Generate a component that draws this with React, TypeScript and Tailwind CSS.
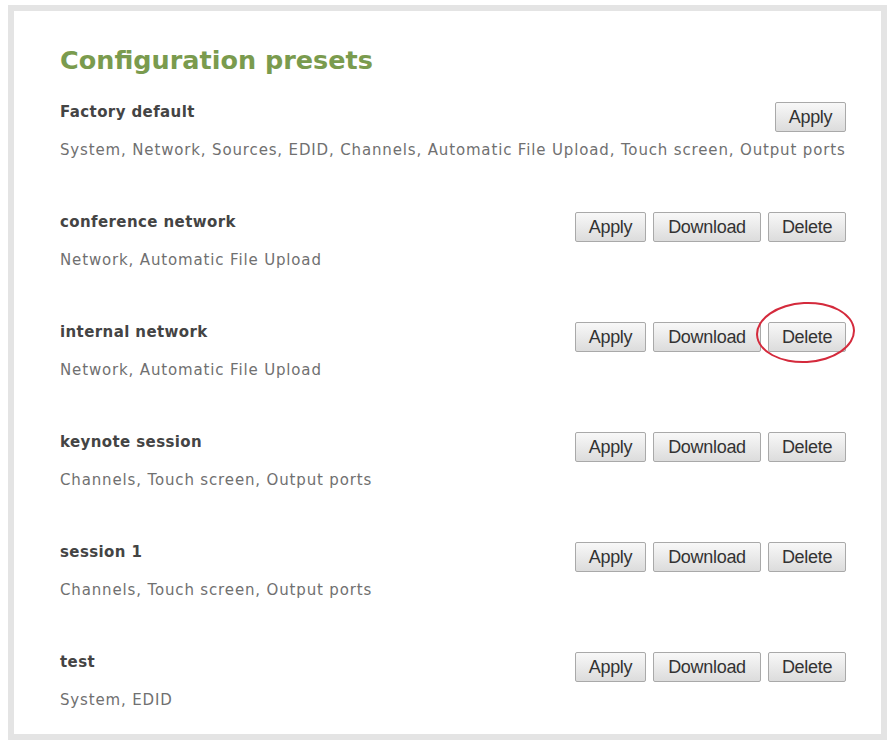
import React from "react";

type Preset = { name: string; desc: string; factory?: boolean; circled?: boolean };

const presets: Preset[] = [
  { name: "Factory default", desc: "System, Network, Sources, EDID, Channels, Automatic File Upload, Touch screen, Output ports", factory: true },
  { name: "conference network", desc: "Network, Automatic File Upload" },
  { name: "internal network", desc: "Network, Automatic File Upload", circled: true },
  { name: "keynote session", desc: "Channels, Touch screen, Output ports" },
  { name: "session 1", desc: "Channels, Touch screen, Output ports" },
  { name: "test", desc: "System, EDID" },
];

function Btn({ label, w }: { label: string; w: string }) {
  return (
    <button
      className={`h-[30px] ${w} border border-[#a9a9a9] rounded-[2px] bg-gradient-to-b from-[#f8f8f8] to-[#dcdcdc] text-[#333] text-[18px] leading-none tracking-[-0.3px] font-['Liberation_Sans',Arial,sans-serif] flex items-center justify-center`}
    >
      {label}
    </button>
  );
}

export default function App() {
  return (
    <div className="w-[890px] h-[740px] bg-white overflow-hidden">
      <div className="ml-[8px] mt-[5px] w-[879px] h-[735px] border-[6px] border-[#e4e4e4] bg-white">
        <div className="pl-[46px] pr-[35px] font-['DejaVu_Sans',Verdana,sans-serif]">
          <h1 className="mt-[34px] h-[30px] leading-[30px] text-[25.5px] font-bold text-[#7a9b4e]">
            Configuration presets
          </h1>
          <div className="mt-[27px]">
            {presets.map((p) => (
              <div key={p.name} className="h-[110px]">
                <div className="flex justify-between items-start">
                  <div className="mt-[1px] text-[15px] leading-[18px] tracking-[0.4px] font-bold text-[#444]">{p.name}</div>
                  <div className="flex gap-[7px]">
                    <Btn label="Apply" w="w-[71px]" />
                    {!p.factory && <Btn label="Download" w="w-[108px]" />}
                    {!p.factory && (
                      <div className="relative">
                        <Btn label="Delete" w="w-[78px]" />
                        {p.circled && (
                          <div className="absolute left-[-12px] top-[-20px] w-[99px] h-[61px] rounded-[50%] border-2 border-[#d42a3c] -rotate-3 pointer-events-none" />
                        )}
                      </div>
                    )}
                  </div>
                </div>
                <div className="mt-[8px] text-[15px] leading-[20px] tracking-[0.85px] text-[#707070] whitespace-nowrap">{p.desc}</div>
              </div>
            ))}
          </div>
        </div>
      </div>
    </div>
  );
}
